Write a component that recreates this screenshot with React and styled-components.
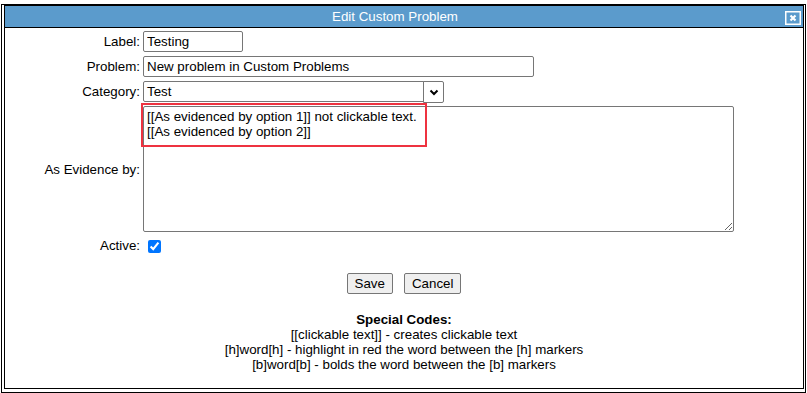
import React from "react";
import styled, { createGlobalStyle } from "styled-components";

const Global = createGlobalStyle`
  html, body { margin: 0; padding: 0; background: #fff; }
  body { font-family: "Liberation Sans", Arial, sans-serif; font-size: 13.33px; color: #000; }
  * { box-sizing: border-box; }
`;

const Page = styled.div`
  padding: 4px 0 0 1px;
`;

const Dialog = styled.div`
  width: 805px;
  height: 389px;
  border: 1px solid #000;
  padding: 0 1px 3px 2px;
  background: #fff;
`;

const Panel = styled.div`
  width: 800px;
  height: 384px;
  border: 1px solid #000;
  border-top: none;
  display: flex;
  flex-direction: column;
`;

const TitleBar = styled.div`
  height: 23px;
  background: #5b9bcc;
  border-top: 1px solid #000;
  border-bottom: 1px solid #000;
  display: flex;
  align-items: center;
  padding: 0 2px 0 0;
`;

const Title = styled.div`
  flex: 1;
  text-align: center;
  color: #fff;
  font-size: 13.33px;
`;

const CloseBtn = styled.div`
  width: 16px;
  height: 14px;
  display: flex;
  align-items: center;
  justify-content: center;
  margin-top: 2px;
`;

const Form = styled.div`
  display: grid;
  grid-template-columns: 135px 1fr;
  column-gap: 3px;
  row-gap: 4px;
  padding-top: 3px;
  align-items: center;
`;

const Label = styled.div`
  text-align: right;
  color: #000;
`;

const TextInput = styled.input`
  width: ${(p) => p.$w}px;
  height: 21px;
  border: 1px solid #767676;
  border-radius: 2px;
  padding: 1px 3px;
  font-family: "Liberation Sans", Arial, sans-serif;
  font-size: 13.33px;
  color: #000;
  outline: none;
`;

const SelectWrap = styled.div`
  display: flex;
  align-items: stretch;
  width: 301px;
  height: 21px;
`;

const SelectText = styled.div`
  flex: 1;
  border: 1px solid #767676;
  border-radius: 2px 0 0 2px;
  padding: 1px 3px;
  display: flex;
  align-items: center;
  line-height: 1;
`;

const SelectArrow = styled.div`
  width: 21px;
  height: 22px;
  margin-left: -1px;
  border: 1px solid #767676;
  border-radius: 0 2px 2px 0;
  display: flex;
  align-items: center;
  justify-content: center;
`;

const AreaWrap = styled.div`
  position: relative;
  width: 591px;
  height: 126px;
`;

const Area = styled.textarea`
  display: block;
  width: 591px;
  height: 126px;
  border: 1px solid #767676;
  border-radius: 2px;
  padding: 2px 3px;
  font-family: "Liberation Sans", Arial, sans-serif;
  font-size: 13.33px;
  line-height: 15px;
  color: #000;
  resize: both;
  outline: none;
`;

const Highlight = styled.div`
  position: absolute;
  left: -2px;
  top: -3px;
  width: 286px;
  height: 44px;
  border: 2px solid #ee3340;
  pointer-events: none;
`;

const Check = styled.input`
  width: 13px;
  height: 13px;
  margin: 2px 0 2px 5px;
  accent-color: #0075ff;
`;

const CheckCell = styled.div`
  display: flex;
  align-items: center;
  height: 16px;
  margin-top: 2px;
`;

const Buttons = styled.div`
  display: flex;
  justify-content: center;
  gap: 11px;
  margin-top: 19px;
`;

const Button = styled.button`
  height: 21px;
  padding: 1px 7px;
  font-family: "Liberation Sans", Arial, sans-serif;
  font-size: 13.33px;
  color: #000;
  background: #efefef;
  border: 1px solid #767676;
  border-radius: 2px;
`;

const Codes = styled.div`
  margin-top: 18px;
  text-align: center;
  line-height: 15px;
  color: #000;
`;

const CodesTitle = styled.div`
  font-weight: bold;
`;

export default function App() {
  return (
    <>
      <Global />
      <Page>
        <Dialog>
          <Panel>
            <TitleBar>
              <Title>Edit Custom Problem</Title>
              <CloseBtn>
                <svg width="16" height="14" viewBox="0 0 16 14">
                  <rect x="0.75" y="0.75" width="14.5" height="12.5" fill="none" stroke="#fff" strokeWidth="1.5" />
                  <path d="M5.5 4.5 L10.5 9.5 M10.5 4.5 L5.5 9.5" stroke="#fff" strokeWidth="2.2" />
                </svg>
              </CloseBtn>
            </TitleBar>
            <Form>
              <Label>Label:</Label>
              <div><TextInput $w={100} defaultValue="Testing" /></div>
              <Label>Problem:</Label>
              <div><TextInput $w={391} defaultValue="New problem in Custom Problems" /></div>
              <Label>Category:</Label>
              <SelectWrap>
                <SelectText>Test</SelectText>
                <SelectArrow>
                  <svg width="10" height="7" viewBox="0 0 10 7">
                    <path d="M1.5 1.5 L5 5 L8.5 1.5" fill="none" stroke="#000" strokeWidth="2" />
                  </svg>
                </SelectArrow>
              </SelectWrap>
              <Label>As Evidence by:</Label>
              <AreaWrap>
                <Area
                  readOnly
                  value={"[[As evidenced by option 1]] not clickable text.\n[[As evidenced by option 2]]"}
                />
                <Highlight />
              </AreaWrap>
              <Label>Active:</Label>
              <CheckCell>
                <Check type="checkbox" defaultChecked />
              </CheckCell>
            </Form>
            <Buttons>
              <Button>Save</Button>
              <Button>Cancel</Button>
            </Buttons>
            <Codes>
              <CodesTitle>Special Codes:</CodesTitle>
              <div>[[clickable text]] - creates clickable text</div>
              <div>[h]word[h] - highlight in red the word between the [h] markers</div>
              <div>[b]word[b] - bolds the word between the [b] markers</div>
            </Codes>
          </Panel>
        </Dialog>
      </Page>
    </>
  );
}
